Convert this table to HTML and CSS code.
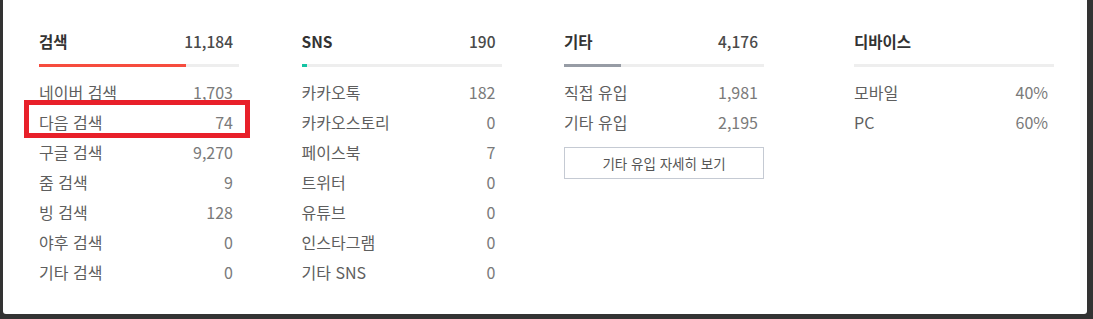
FILE: index.html
```html
<!DOCTYPE html>
<html lang="ko">
<head>
<meta charset="utf-8">
<title>유입 경로</title>
<link rel="stylesheet" href="styles.css">
</head>
<body>
<div class="panel">
  <div class="cols">
    <section class="col">
      <div class="head"><span class="title">검색</span><span class="total">11,184</span></div>
      <div class="track"><div class="fill red" style="width:73.5%"></div></div>
      <ul class="rows">
        <li><span>네이버 검색</span><span class="num">1,703</span></li>
        <li><span>다음 검색</span><span class="num">74</span></li>
        <li><span>구글 검색</span><span class="num">9,270</span></li>
        <li><span>줌 검색</span><span class="num">9</span></li>
        <li><span>빙 검색</span><span class="num">128</span></li>
        <li><span>야후 검색</span><span class="num">0</span></li>
        <li><span>기타 검색</span><span class="num">0</span></li>
      </ul>
    </section>
    <section class="col">
      <div class="head"><span class="title">SNS</span><span class="total">190</span></div>
      <div class="track"><div class="fill teal" style="width:2.5%"></div></div>
      <ul class="rows">
        <li><span>카카오톡</span><span class="num">182</span></li>
        <li><span>카카오스토리</span><span class="num">0</span></li>
        <li><span>페이스북</span><span class="num">7</span></li>
        <li><span>트위터</span><span class="num">0</span></li>
        <li><span>유튜브</span><span class="num">0</span></li>
        <li><span>인스타그램</span><span class="num">0</span></li>
        <li><span>기타 SNS</span><span class="num">0</span></li>
      </ul>
    </section>
    <section class="col">
      <div class="head"><span class="title">기타</span><span class="total">4,176</span></div>
      <div class="track"><div class="fill gray" style="width:28.5%"></div></div>
      <ul class="rows">
        <li><span>직접 유입</span><span class="num">1,981</span></li>
        <li><span>기타 유입</span><span class="num">2,195</span></li>
      </ul>
      <button class="more" type="button">기타 유입 자세히 보기</button>
    </section>
    <section class="col last">
      <div class="head"><span class="title">디바이스</span></div>
      <div class="track"></div>
      <ul class="rows">
        <li><span>모바일</span><span class="num">40%</span></li>
        <li><span>PC</span><span class="num">60%</span></li>
      </ul>
    </section>
  </div>
  <div class="highlight"></div>
</div>
</body>
</html>
```

FILE: styles.css
```css
html, body {
  margin: 0;
  padding: 0;
  background: #333333;
  height: 100%;
  overflow: hidden;
}

body {
  font-family: "Noto Sans CJK KR", "Noto Sans", sans-serif;
}

.panel {
  position: relative;
  margin-left: 3px;
  width: 1084px;
  height: 314px;
  background: #ffffff;
  border-radius: 0 0 3px 3px;
  box-sizing: border-box;
  padding: 29px 0 0 36px;
}

.cols {
  display: flex;
  gap: 62.5px;
}

.col {
  width: 200px;
  flex: none;
}

.col.last {
  margin-left: 27.5px;
}

.head {
  display: flex;
  justify-content: space-between;
  align-items: center;
  height: 24px;
  padding-right: 6px;
  font-size: 15.5px;
  line-height: 24px;
  color: #333333;
}

.title {
  font-weight: 700;
}

.total {
  font-weight: 500;
  color: #4a4a4a;
}

.track {
  margin-top: 11px;
  height: 3px;
  background: #eeeeee;
}

.fill {
  height: 3px;
}

.fill.red { background: #f64c3e; }
.fill.teal { background: #13c3a3; }
.fill.gray { background: #979ca5; }

.rows {
  list-style: none;
  margin: 9.5px 0 0;
  padding: 0;
}

.rows li {
  display: flex;
  justify-content: space-between;
  align-items: center;
  height: 30px;
  padding-right: 6px;
  font-size: 16px;
  color: #5e5e5e;
}

.num {
  color: #7a7a7a;
}

.more {
  display: block;
  margin-top: 10px;
  width: 200px;
  height: 32px;
  border: 1px solid #c5cad3;
  background: #ffffff;
  font-family: "Noto Sans CJK KR", "Noto Sans", sans-serif;
  font-size: 13.5px;
  color: #555555;
  padding: 0;
}

.highlight {
  position: absolute;
  left: 21px;
  top: 100px;
  width: 226px;
  height: 38px;
  box-sizing: border-box;
  border: 5px solid #e8202a;
}
```
